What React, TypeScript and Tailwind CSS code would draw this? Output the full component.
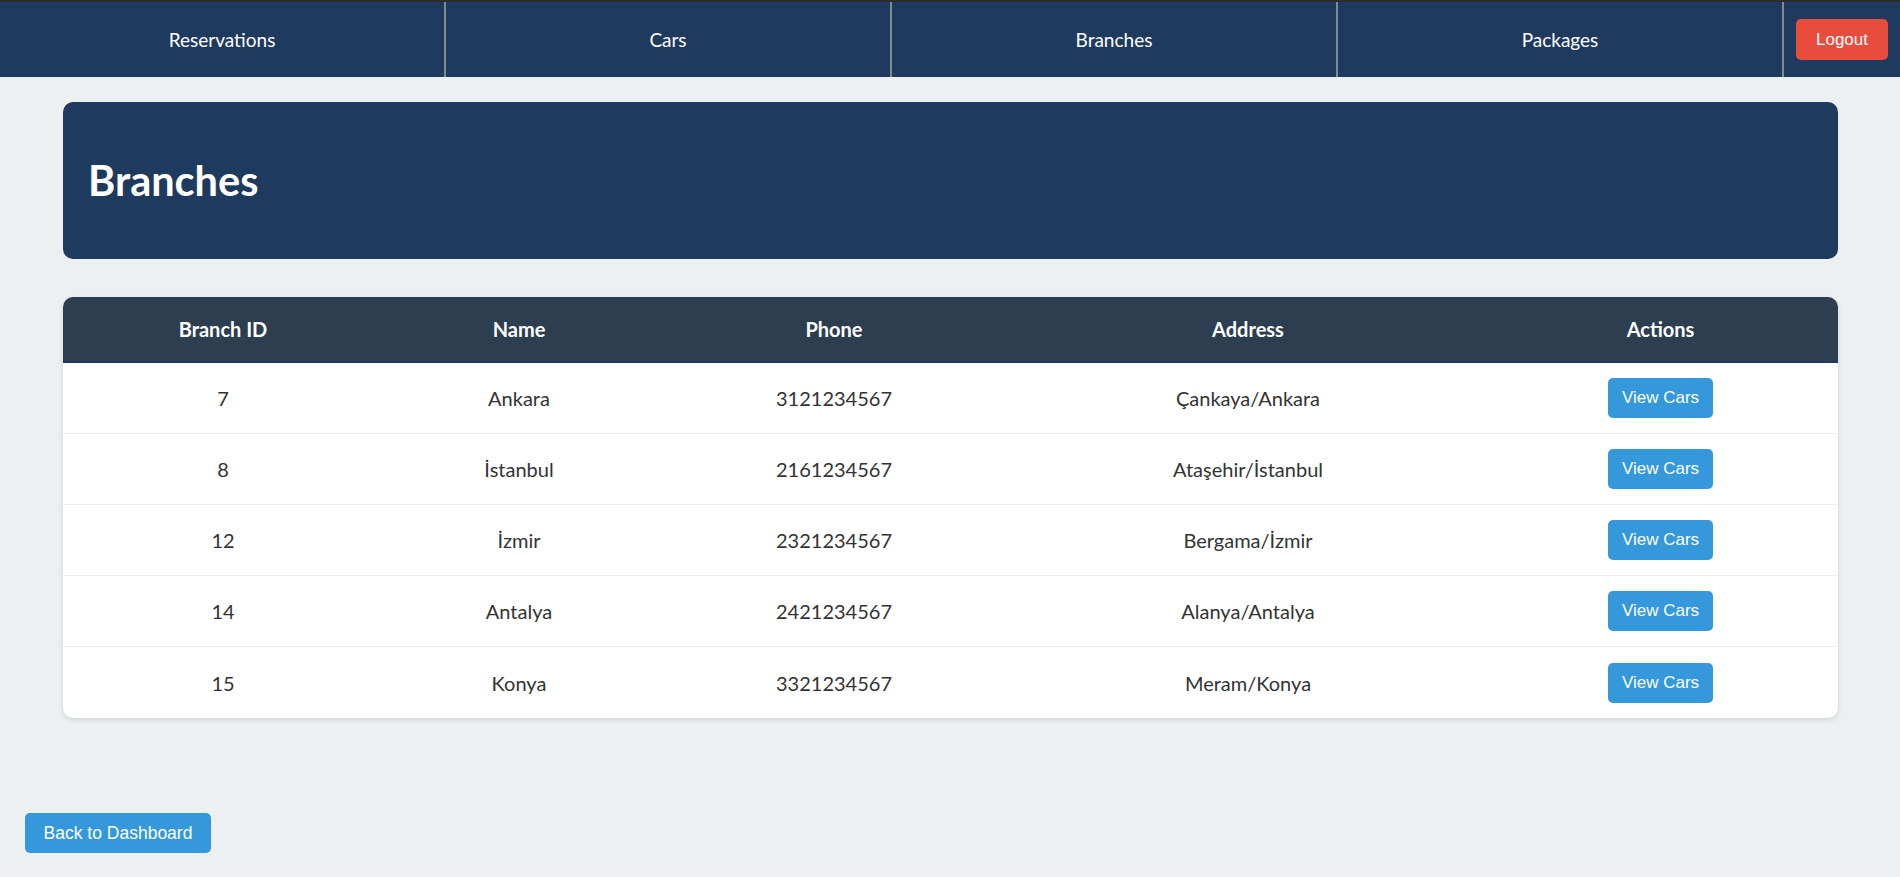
const navLinks = ['Reservations', 'Cars', 'Branches', 'Packages']

const branches = [
  { id: 7, name: 'Ankara', phone: '3121234567', address: 'Çankaya/Ankara' },
  { id: 8, name: 'İstanbul', phone: '2161234567', address: 'Ataşehir/İstanbul' },
  { id: 12, name: 'İzmir', phone: '2321234567', address: 'Bergama/İzmir' },
  { id: 14, name: 'Antalya', phone: '2421234567', address: 'Alanya/Antalya' },
  { id: 15, name: 'Konya', phone: '3321234567', address: 'Meram/Konya' },
]

const cols = 'grid grid-cols-[320px_272px_358px_470px_1fr] items-center text-center'

export default function App() {
  return (
    <div className="min-h-[877px] bg-[#ecf0f1] font-['Lato','Noto_Sans',sans-serif] text-[20px] text-[#333]">
      {/* Navbar */}
      <nav className="flex h-[77px] border-t-2 border-[#2b2b2b] bg-[#1f3a5f] text-white">
        {navLinks.map((l) => (
          <a
            key={l}
            href="#"
            className="flex flex-1 items-center justify-center border-r-2 border-[#7f8c8d] pt-[2px] text-[19px]"
          >
            {l}
          </a>
        ))}
        <div className="flex items-center px-[12px]">
          <button className="h-[41px] w-[92px] rounded-[5px] bg-[#e74c3c] font-['Liberation_Sans',Arial,sans-serif] text-[17px] text-white">
            Logout
          </button>
        </div>
      </nav>

      <main className="ml-[63px] mr-[62px] pt-[25px]">
        {/* Page header */}
        <div className="flex h-[157px] items-center rounded-[10px] bg-[#1f3a5f] px-[25px]">
          <h1 className="text-[41.5px] font-bold text-white">Branches</h1>
        </div>

        {/* Table */}
        <div className="mt-[38px] overflow-hidden rounded-[10px] bg-white shadow-[0_2px_5px_rgba(0,0,0,0.12)]">
          <div className={`${cols} h-[66px] border-b-2 border-[#1f3a5f] bg-[#2c3e50] font-bold text-white`}>
            <div>Branch ID</div>
            <div>Name</div>
            <div>Phone</div>
            <div>Address</div>
            <div>Actions</div>
          </div>
          {branches.map((b, i) => (
            <div
              key={b.id}
              className={`${cols} h-[71px] ${i < branches.length - 1 ? 'border-b border-[#eeeeee]' : ''}`}
            >
              <div>{b.id}</div>
              <div>{b.name}</div>
              <div>{b.phone}</div>
              <div>{b.address}</div>
              <div className="flex justify-center">
                <button className="h-[40px] w-[105px] rounded-[5px] bg-[#3498db] font-['Liberation_Sans',Arial,sans-serif] text-[17px] text-white">
                  View Cars
                </button>
              </div>
            </div>
          ))}
        </div>
      </main>

      <button className="fixed bottom-[24px] left-[25px] h-[40px] w-[186px] rounded-[5px] bg-[#3498db] font-['Liberation_Sans',Arial,sans-serif] text-[17.5px] text-white">
        Back to Dashboard
      </button>
    </div>
  )
}
